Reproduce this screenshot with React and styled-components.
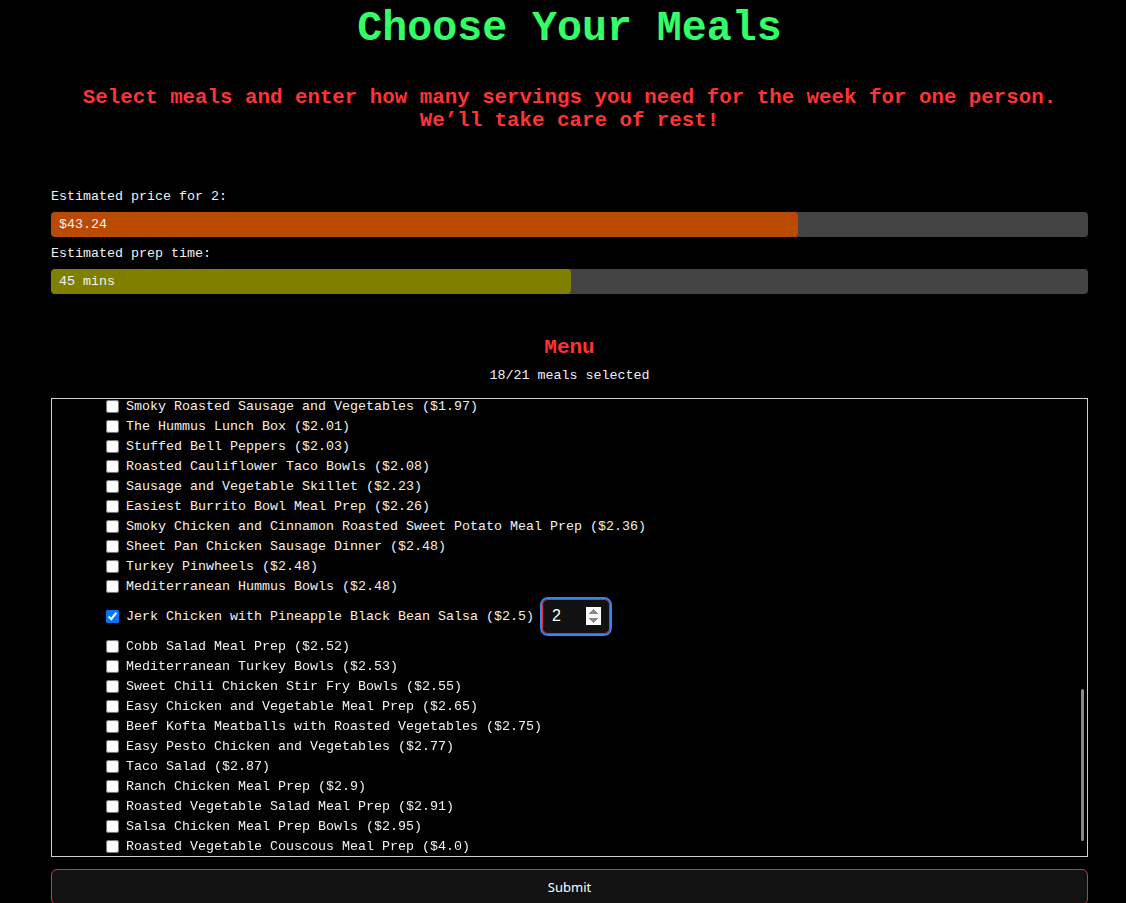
import React, { useLayoutEffect, useRef, useState } from "react";
import styled, { createGlobalStyle } from "styled-components";

const Global = createGlobalStyle`
  html { scrollbar-width: none; background: #000; }
  body {
    margin: 0;
    background: #000;
    color: #f2f2f2;
    font-family: "Liberation Mono", "Courier New", monospace;
  }
`;

const Page = styled.main`
  padding: 5px 38px 40px 51px;
  display: flex;
  flex-direction: column;
`;

const Title = styled.h1`
  margin: 0;
  text-align: center;
  font-size: 41.6px;
  line-height: 47px;
  font-weight: bold;
  color: #33ff66;
`;

const Subtitle = styled.h2`
  margin: 34px 0 0;
  text-align: center;
  font-size: 20.8px;
  line-height: 23px;
  font-weight: bold;
  color: #ff3333;
`;

const Stats = styled.section`
  margin-top: 57px;
  display: flex;
  flex-direction: column;
`;

const StatLabel = styled.div`
  font-size: 13.33px;
  line-height: 16px;
  margin-bottom: 7px;
`;

const Track = styled.div`
  height: 25px;
  background: #444;
  border-radius: 4px;
  margin-bottom: 9px;
  overflow: hidden;
  display: flex;
`;

const Fill = styled.div`
  background: ${(p) => p.$color};
  border-radius: 4px;
  display: flex;
  align-items: center;
  padding-left: 8px;
  box-sizing: border-box;
  font-size: 13.33px;
  color: #f4f4f4;
  white-space: nowrap;
`;

const MenuHeading = styled.h3`
  margin: 33px 0 0;
  text-align: center;
  font-size: 21px;
  line-height: 24px;
  font-weight: bold;
  color: #ff3333;
`;

const Count = styled.div`
  margin-top: 8px;
  text-align: center;
  font-size: 13.33px;
  line-height: 16px;
`;

const ListFrame = styled.div`
  position: relative;
  margin-top: 14px;
  border: 1px solid #cfcfcf;
`;

const List = styled.ul`
  margin: 0;
  padding: 0 0 0 50px;
  list-style: none;
  height: 457px;
  overflow-y: auto;
  scrollbar-width: none;
`;

const ScrollThumb = styled.div`
  position: absolute;
  top: 290px;
  right: 3px;
  width: 3px;
  height: 152px;
  border-radius: 2px;
  background: #8a8a8a;
  pointer-events: none;
`;

const Item = styled.li`
  display: flex;
  align-items: center;
  height: ${(p) => (p.$tall ? 40 : 20)}px;
  font-size: 13.33px;
  white-space: nowrap;
`;

const Check = styled.input`
  margin: 0 4px 0 4px;
  width: 13px;
  height: 13px;
`;

const Name = styled.label`
  margin-left: 3px;
  color: #f2f2f2;
`;

const Servings = styled.input`
  margin-left: 8px;
  width: 68px;
  height: 35px;
  box-sizing: border-box;
  padding: 0 8px 0 9px;
  background: #111;
  color: #fff;
  border: 1px solid #e03030;
  border-radius: 6px;
  font-family: "Liberation Sans", Arial, sans-serif;
  font-size: 16px;
  &:focus {
    outline: 2px solid #3b7ff0;
    outline-offset: 0px;
  }
`;

const Submit = styled.button`
  margin-top: 12px;
  height: 36px;
  background: #121212;
  color: #fff;
  border: 1px solid #d63333;
  border-radius: 6px;
  font-family: "Noto Sans", "Liberation Sans", sans-serif;
  font-size: 13px;
  cursor: pointer;
`;

const hidden = [
  ["Peanut Butter Banana Oats", 0.89], ["Overnight Oats Jars", 0.92], ["Egg Muffin Cups", 0.95],
  ["Black Bean Soup", 0.98], ["Lentil Curry", 1.01], ["Chickpea Salad Sandwich", 1.04],
  ["Veggie Fried Rice", 1.07], ["Pasta e Fagioli", 1.09], ["Tomato Basil Soup", 1.12],
  ["Spinach Egg Scramble", 1.14], ["Bean and Cheese Burritos", 1.17], ["Red Lentil Dal", 1.19],
  ["Minestrone Soup", 1.22], ["Sweet Potato Chili", 1.24], ["Chickpea Curry", 1.27],
  ["Vegetable Lo Mein", 1.29], ["Baked Ziti", 1.31], ["Mushroom Risotto", 1.34],
  ["Breakfast Burrito Bowls", 1.36], ["Quinoa Black Bean Salad", 1.39], ["Greek Pasta Salad", 1.41],
  ["Egg Roll in a Bowl", 1.44], ["Teriyaki Tofu Bowls", 1.46], ["Chicken Noodle Soup", 1.49],
  ["Turkey Chili", 1.51], ["Veggie Stir Fry", 1.54], ["Shakshuka", 1.56],
  ["Pesto Pasta Salad", 1.58], ["Honey Garlic Chicken", 1.61], ["Tuna Salad Wraps", 1.63],
  ["Chicken Caesar Wraps", 1.66], ["Southwest Chicken Bowls", 1.68], ["Baked Falafel Bowls", 1.71],
  ["Lemon Herb Chicken", 1.73], ["Turkey Taco Lettuce Wraps", 1.76], ["BBQ Chicken Bowls", 1.78],
  ["Chicken Fajita Bowls", 1.81], ["Sesame Chicken Bowls", 1.83], ["Cajun Chicken Pasta", 1.86],
  ["Buffalo Chicken Wraps", 1.88], ["Korean Beef Bowls", 1.91], ["Italian Sausage Pasta", 1.93],
  ["Chicken Burrito Bowls", 1.95],
];

const visible = [
  ["Smoky Roasted Sausage and Vegetables", "1.97"],
  ["The Hummus Lunch Box", "2.01"],
  ["Stuffed Bell Peppers", "2.03"],
  ["Roasted Cauliflower Taco Bowls", "2.08"],
  ["Sausage and Vegetable Skillet", "2.23"],
  ["Easiest Burrito Bowl Meal Prep", "2.26"],
  ["Smoky Chicken and Cinnamon Roasted Sweet Potato Meal Prep", "2.36"],
  ["Sheet Pan Chicken Sausage Dinner", "2.48"],
  ["Turkey Pinwheels", "2.48"],
  ["Mediterranean Hummus Bowls", "2.48"],
  ["Jerk Chicken with Pineapple Black Bean Salsa", "2.5"],
  ["Cobb Salad Meal Prep", "2.52"],
  ["Mediterranean Turkey Bowls", "2.53"],
  ["Sweet Chili Chicken Stir Fry Bowls", "2.55"],
  ["Easy Chicken and Vegetable Meal Prep", "2.65"],
  ["Beef Kofta Meatballs with Roasted Vegetables", "2.75"],
  ["Easy Pesto Chicken and Vegetables", "2.77"],
  ["Taco Salad", "2.87"],
  ["Ranch Chicken Meal Prep", "2.9"],
  ["Roasted Vegetable Salad Meal Prep", "2.91"],
  ["Salsa Chicken Meal Prep Bowls", "2.95"],
  ["Roasted Vegetable Couscous Meal Prep", "4.0"],
];

const meals = [
  ...hidden.map(([n, p]) => ({ name: n, price: p.toFixed(2) })),
  ...visible.map(([n, p]) => ({ name: n, price: p })),
];

export default function App() {
  const listRef = useRef(null);
  const inputRef = useRef(null);
  const [selected, setSelected] = useState({
    "Jerk Chicken with Pineapple Black Bean Salsa": 2,
  });

  useLayoutEffect(() => {
    const el = listRef.current;
    if (el) el.scrollTop = el.scrollHeight;
    if (inputRef.current) inputRef.current.focus({ preventScroll: true });
  }, []);

  const toggle = (name) =>
    setSelected((s) => {
      const n = { ...s };
      if (name in n) delete n[name];
      else n[name] = 1;
      return n;
    });

  return (
    <Page>
      <Global />
      <Title>Choose Your Meals</Title>
      <Subtitle>
        Select meals and enter how many servings you need for the week for one person.
        <br />
        We’ll take care of rest!
      </Subtitle>

      <Stats>
        <StatLabel>Estimated price for 2:</StatLabel>
        <Track>
          <Fill $color="#b94a00" style={{ width: "72%" }}>$43.24</Fill>
        </Track>
        <StatLabel>Estimated prep time:</StatLabel>
        <Track>
          <Fill $color="#808000" style={{ width: "50.1%" }}>45 mins</Fill>
        </Track>
      </Stats>

      <MenuHeading>Menu</MenuHeading>
      <Count>18/21 meals selected</Count>

      <ListFrame>
        <List ref={listRef}>
          {meals.map((m, i) => {
            const checked = m.name in selected;
            const id = `meal-${i}`;
            return (
              <Item key={m.name} $tall={checked}>
                <Check
                  id={id}
                  type="checkbox"
                  checked={checked}
                  onChange={() => toggle(m.name)}
                />
                <Name htmlFor={id}>
                  {m.name} (${m.price})
                </Name>
                {checked && (
                  <Servings
                    ref={inputRef}
                    type="number"
                    min="1"
                    value={selected[m.name]}
                    onChange={(e) =>
                      setSelected((s) => ({ ...s, [m.name]: e.target.value }))
                    }
                  />
                )}
              </Item>
            );
          })}
        </List>
        <ScrollThumb />
      </ListFrame>

      <Submit type="button">Submit</Submit>
    </Page>
  );
}
